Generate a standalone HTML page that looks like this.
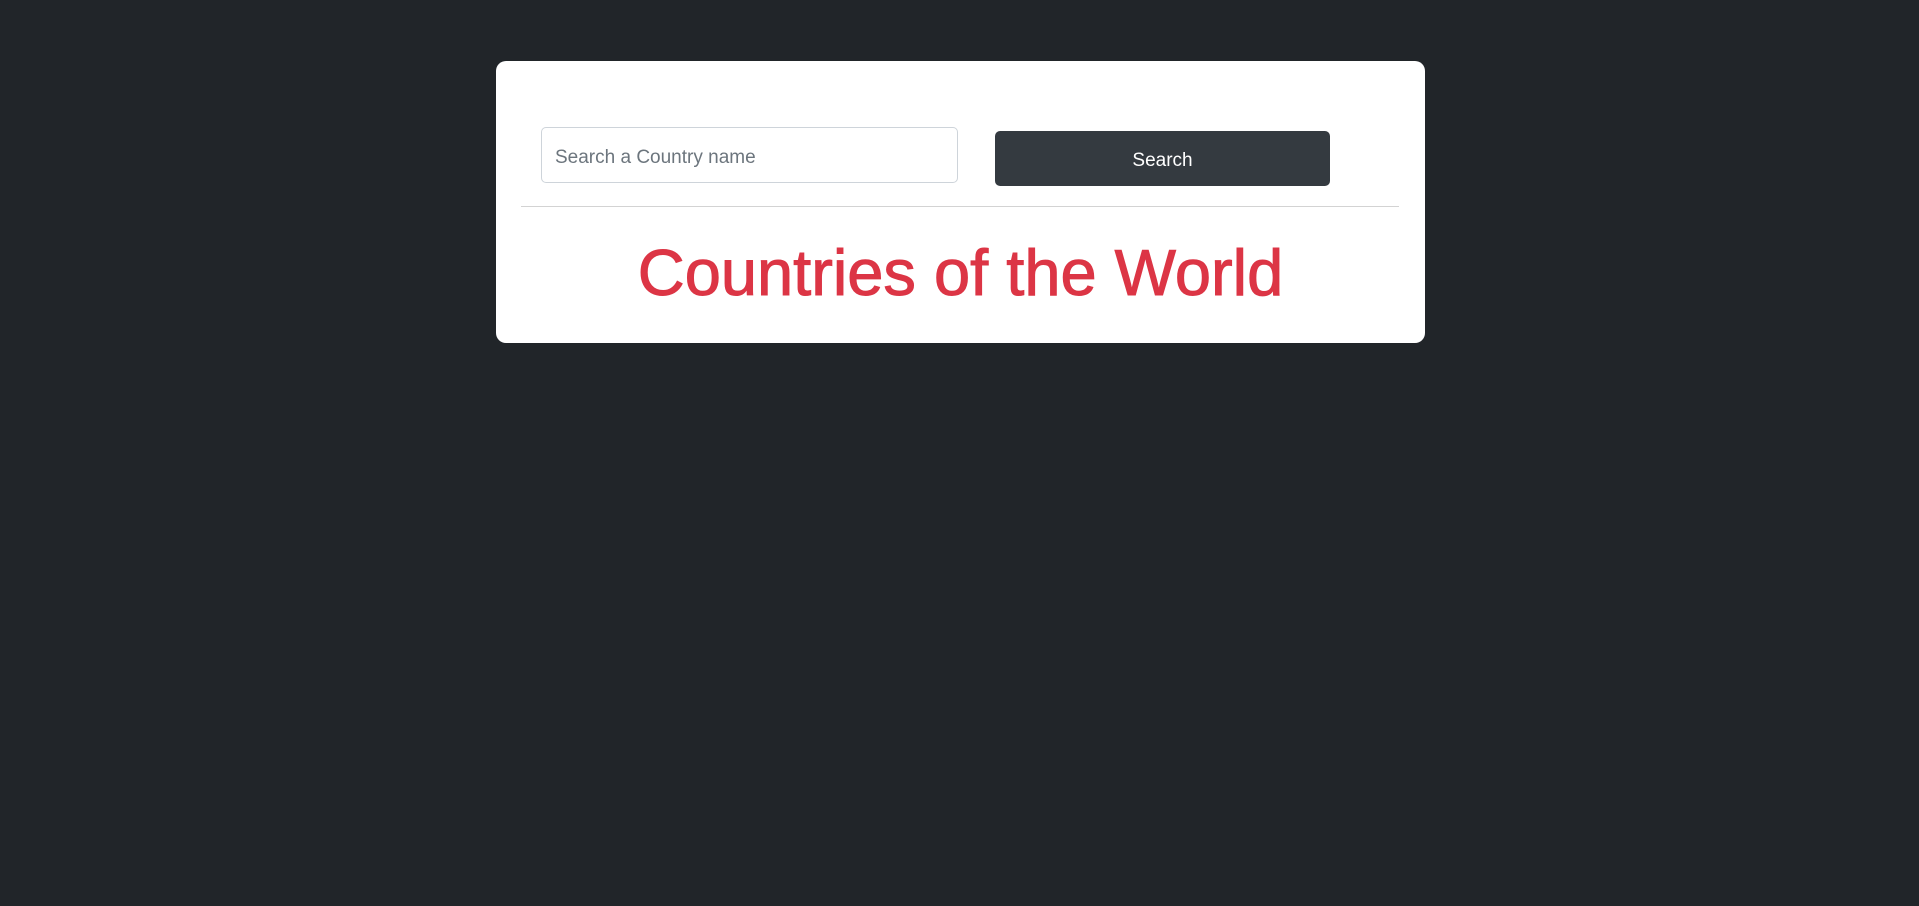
<!DOCTYPE html>
<html><head><style>
html,body{margin:0;padding:0;background:#212529;width:1919px;height:906px;overflow:hidden;font-family:"Liberation Sans",sans-serif;}
.card{position:absolute;left:496px;top:61px;width:929px;height:282px;background:#fff;border-radius:10px;}
.inp{position:absolute;left:45px;top:66px;width:417px;height:56px;box-sizing:border-box;border:1px solid #ced4da;border-radius:5px;font-size:19px;color:#6c757d;line-height:60px;padding-left:13px;}
.btn{position:absolute;left:499px;top:70px;width:335px;height:55px;background:#343a40;border-radius:5px;color:#fff;font-size:19px;text-align:center;line-height:59px;}
.hr{position:absolute;left:25px;top:145px;width:878px;height:1px;background:#d3d3d3;}
h1{position:absolute;left:0;width:929px;top:172px;margin:0;text-align:center;color:#dc3545;font-size:65px;font-weight:normal;line-height:80px;letter-spacing:0;-webkit-text-stroke:1px #dc3545;}
</style></head><body>
<div class="card">
<div class="inp">Search a Country name</div>
<div class="btn">Search</div>
<div class="hr"></div>
<h1>Countries of the World</h1>
</div>
</body></html>
